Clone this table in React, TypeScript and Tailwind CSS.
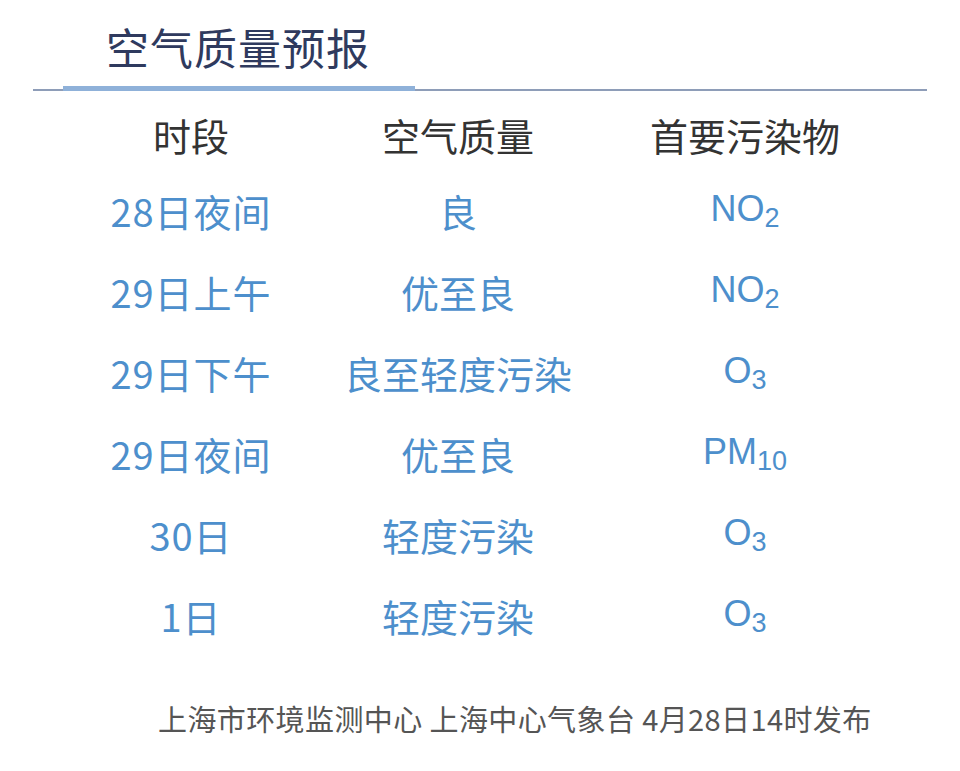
const rows: { time: string; quality: string; pollutant: [string, string] }[] = [
  { time: "28日夜间", quality: "良", pollutant: ["NO", "2"] },
  { time: "29日上午", quality: "优至良", pollutant: ["NO", "2"] },
  { time: "29日下午", quality: "良至轻度污染", pollutant: ["O", "3"] },
  { time: "29日夜间", quality: "优至良", pollutant: ["PM", "10"] },
  { time: "30日", quality: "轻度污染", pollutant: ["O", "3"] },
  { time: "1日", quality: "轻度污染", pollutant: ["O", "3"] },
];

export default function App() {
  return (
    <div
      className="h-[771px] w-[960px] overflow-hidden bg-white"
      style={{ fontFamily: '"Noto Sans CJK SC", "Noto Sans", sans-serif' }}
    >
      <h1 className="pl-[106px] pt-[18px] text-[43px] leading-[56px] tracking-[1px] font-normal text-[#2f3a5e]">
        空气质量预报
      </h1>

      {/* 标题下的分隔线：细线 + 左侧加粗段 */}
      <div className="relative mx-[33px] mt-[12px] h-[5px]">
        <div className="absolute inset-x-0 bottom-0 h-[2px] bg-[#8e9db8]" />
        <div className="absolute bottom-0 left-[30px] h-[5px] w-[352px] bg-[#8fb1d9]" />
      </div>

      <div className="ml-[60px] mt-[16px] grid grid-cols-[262px_272px_302px]">
        <div className="text-center text-[38px] leading-[56px] text-[#333333]">时段</div>
        <div className="text-center text-[38px] leading-[56px] text-[#333333]">空气质量</div>
        <div className="text-center text-[38px] leading-[56px] text-[#333333]">首要污染物</div>
      </div>

      <div className="ml-[60px] mt-[7px] flex flex-col">
        {rows.map((r, i) => (
          <div key={i} className="grid h-[81px] grid-cols-[262px_272px_302px] items-center text-[38px] text-[#4d8fcc]">
            <div className="text-center tracking-[1px]">{r.time}</div>
            <div className="text-center">{r.quality}</div>
            <div className="-mt-[4px] text-center text-[36px]" style={{ fontFamily: '"Liberation Sans", sans-serif' }}>
              {r.pollutant[0]}
              <sub className="text-[27px]">{r.pollutant[1]}</sub>
            </div>
          </div>
        ))}
      </div>

      <p className="mt-[42px] pl-[158px] text-[29px] leading-[40px] tracking-[0.4px] text-[#555555]">
        上海市环境监测中心 上海中心气象台 4月28日14时发布
      </p>
    </div>
  );
}
